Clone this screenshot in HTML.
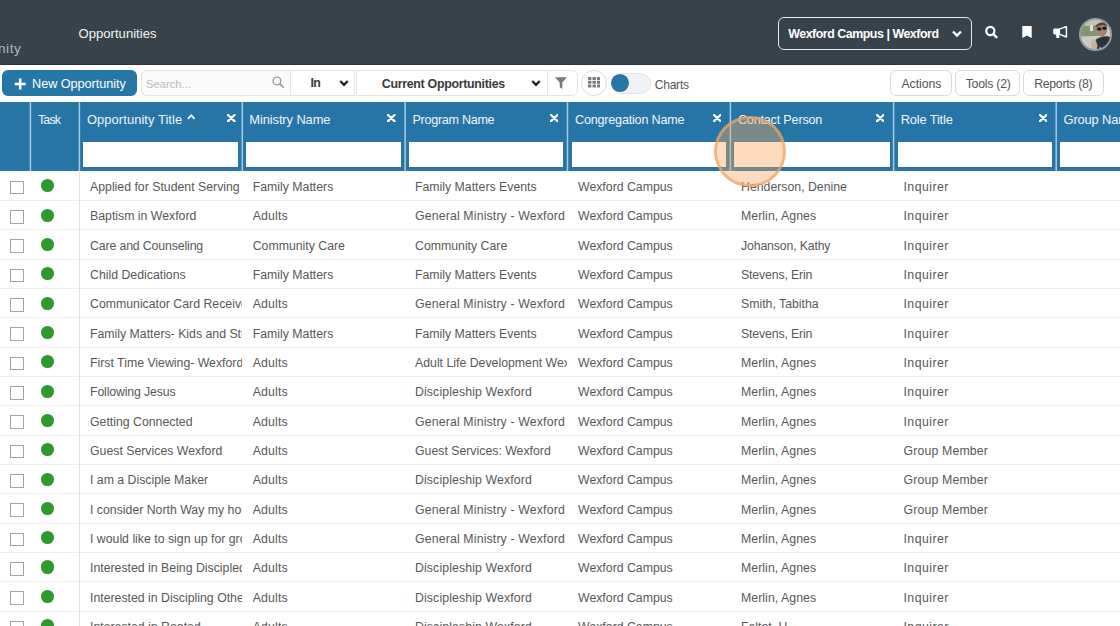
<!DOCTYPE html><html><head><meta charset="utf-8"><style>
*{box-sizing:border-box;margin:0;padding:0}
html,body{width:1120px;height:626px;overflow:hidden;background:#fff;font-family:"Liberation Sans",sans-serif;position:relative}
.abs{position:absolute}
.t{white-space:nowrap}
.box{position:absolute;background:#fff}
</style></head><body>
<div class="abs" style="left:0;top:0;width:1120px;height:65px;background:#37424a"></div>
<div class="abs" style="left:0;top:64px;width:1120px;height:1px;background:#2d343c"></div>
<div class="abs t" style="left:-2.10px;top:42.09px;font-size:13.6px;line-height:13.6px;color:#b4b9be;font-weight:normal;letter-spacing:0.6px;">nity</div>
<div class="abs t" style="left:78.60px;top:27.41px;font-size:13.1px;line-height:13.1px;color:#f1f3f4;font-weight:normal;letter-spacing:0px;">Opportunities</div>
<div class="abs" style="left:778px;top:17px;width:194px;height:33px;border:1.3px solid #e6e8ea;border-radius:6px"></div>
<div class="abs t" style="left:788.20px;top:27.80px;font-size:12.4px;line-height:12.4px;color:#fff;font-weight:bold;letter-spacing:-0.46px;">Wexford Campus | Wexford</div>
<svg class="abs" style="left:950px;top:29px" width="14" height="10" viewBox="0 0 14 10"><path d="M3 2.5 L7 6.5 L11 2.5" stroke="#fff" stroke-width="2.4" fill="none"/></svg>
<svg class="abs" style="left:984px;top:25px" width="15" height="14" viewBox="0 0 15 14"><circle cx="6.3" cy="6" r="4.1" stroke="#fff" stroke-width="2.1" fill="none"/><path d="M9.3 9.1 L12.5 12.2" stroke="#fff" stroke-width="2.4" stroke-linecap="round"/></svg>
<svg class="abs" style="left:1021.5px;top:26px" width="10" height="12.2" viewBox="0 0 10 12.2"><path d="M0.3 0 H9.7 V12.1 L5 9.5 L0.3 12.1 Z" fill="#fff"/></svg>
<svg class="abs" style="left:1053px;top:26px" width="16" height="13" viewBox="0 0 16 13"><path d="M6.3 3.1 L13.4 0.6 V11.0 L6.3 8.1 Z" fill="none" stroke="#fff" stroke-width="1.5" stroke-linejoin="round"/><path d="M1.6 2.6 H6.6 V8.4 H1.6 Q0.2 8.4 0.2 7 V4 Q0.2 2.6 1.6 2.6 Z" fill="#fff"/><path d="M2.8 8 H6.3 V12 H3.5 Z" fill="#fff"/></svg>
<svg class="abs" style="left:1079px;top:17.7px" width="33" height="33" viewBox="0 0 33 33"><defs><clipPath id="av"><circle cx="16.5" cy="16.5" r="15.5"/></clipPath><filter id="bl" x="-20%" y="-20%" width="140%" height="140%"><feGaussianBlur stdDeviation="0.6"/></filter></defs><g clip-path="url(#av)"><g filter="url(#bl)"><rect x="-2" y="-2" width="37" height="37" fill="#cfcfca"/><rect x="-2" y="-2" width="37" height="11" fill="#c4c1b8"/><path d="M-1 12 Q4 6 9 8 Q14 5 20 10 L20 18 L-1 19 Z" fill="#84966f"/><rect x="11" y="7" width="3" height="6" fill="#e0e0da"/><rect x="-1" y="18.5" width="22" height="16" fill="#cdcac3"/><ellipse cx="22.8" cy="11.5" rx="5.4" ry="7" fill="#a88270"/><path d="M16.5 7.5 Q22 2.5 28.5 6 L28.5 8.2 Q22 5.5 16.8 9.5 Z" fill="#4e4038"/><ellipse cx="20.2" cy="11" rx="2.3" ry="1.7" fill="#231a1e"/><ellipse cx="25.6" cy="10.3" rx="2.3" ry="1.7" fill="#231a1e"/><path d="M14.5 34 L15.5 23 Q21 17.5 30 18.5 L34 22 V34 Z" fill="#2a303d"/><path d="M13 34 L12 25.5 Q13.5 20 16.5 21.5 L18.5 27.5 L17.5 34 Z" fill="#c9b4a0"/><path d="M19 34 L21 28.5 L25 34 Z" fill="#c3c6ca"/></g></g><circle cx="16.5" cy="16.5" r="15.6" fill="none" stroke="#959ba0" stroke-width="1.9"/></svg>
<div class="abs" style="left:2px;top:70px;width:135px;height:26px;background:#2676a8;border-radius:6px"></div>
<svg class="abs" style="left:14px;top:78px" width="12" height="12" viewBox="0 0 12 12"><path d="M6.2 0.5 V11.5 M0.7 6 H11.7" stroke="#fff" stroke-width="2.5"/></svg>
<div class="abs t" style="left:32.10px;top:77.55px;font-size:12.7px;line-height:12.7px;color:#fff;font-weight:normal;letter-spacing:-0.06px;">New Opportunity</div>
<div class="abs" style="left:141px;top:70px;width:150px;height:26px;border:1px solid #e4e4e4;border-right:none;border-radius:6px 0 0 6px;background:#fafafb"></div>
<div class="abs t" style="left:146.00px;top:78.52px;font-size:11.2px;line-height:11.2px;color:#b9b9b9;font-weight:normal;letter-spacing:0px;">Search...</div>
<svg class="abs" style="left:272.2px;top:76px" width="12" height="12" viewBox="0 0 12 12"><circle cx="5" cy="5" r="3.9" stroke="#9b9b9b" stroke-width="1.4" fill="none"/><path d="M7.8 7.8 L11.2 11.2" stroke="#9b9b9b" stroke-width="1.7" stroke-linecap="round"/></svg>
<div class="abs" style="left:290px;top:70px;width:65px;height:26px;border:1px solid #e4e4e4;background:#fff"></div>
<div class="abs t" style="left:310.50px;top:77.40px;font-size:12.4px;line-height:12.4px;color:#3a3a3a;font-weight:bold;letter-spacing:-0.8px;">In</div>
<svg class="abs" style="left:337.5px;top:79px" width="12" height="9" viewBox="0 0 12 9"><path d="M2.3 2 L6 5.8 L9.7 2" stroke="#222" stroke-width="2.3" fill="none"/></svg>
<div class="abs" style="left:355.5px;top:70px;width:193px;height:26px;border:1px solid #e4e4e4;background:#fff"></div>
<div class="abs t" style="left:381.80px;top:78.40px;font-size:12.4px;line-height:12.4px;color:#3a3a3a;font-weight:bold;letter-spacing:-0.3px;">Current Opportunities</div>
<svg class="abs" style="left:530px;top:79px" width="12" height="9" viewBox="0 0 12 9"><path d="M2.3 2 L6 5.8 L9.7 2" stroke="#222" stroke-width="2.3" fill="none"/></svg>
<div class="abs" style="left:547px;top:70px;width:31px;height:26px;border:1px solid #e4e4e4;border-radius:0 6px 6px 0;background:#fff"></div>
<svg class="abs" style="left:555px;top:77.2px" width="12" height="12" viewBox="0 0 12 12"><path d="M0 0.3 H12 L7.3 5.6 V12 L4.7 10.2 V5.6 Z" fill="#7a7a7a"/></svg>
<div class="abs" style="left:581.1px;top:69.8px;width:26px;height:26px;border-radius:50%;border:1px solid #dedede;background:#fff"></div>
<svg class="abs" style="left:588px;top:77.3px" width="12.4" height="10.6" viewBox="0 0 12.4 10.6"><g fill="#7a7a7a"><rect x="0.0" y="0.0" width="3.4" height="2.9" rx="0.5"/><rect x="0.0" y="3.8" width="3.4" height="2.9" rx="0.5"/><rect x="0.0" y="7.6" width="3.4" height="2.9" rx="0.5"/><rect x="4.5" y="0.0" width="3.4" height="2.9" rx="0.5"/><rect x="4.5" y="3.8" width="3.4" height="2.9" rx="0.5"/><rect x="4.5" y="7.6" width="3.4" height="2.9" rx="0.5"/><rect x="9.0" y="0.0" width="3.4" height="2.9" rx="0.5"/><rect x="9.0" y="3.8" width="3.4" height="2.9" rx="0.5"/><rect x="9.0" y="7.6" width="3.4" height="2.9" rx="0.5"/></g></svg>
<div class="abs" style="left:611.3px;top:73px;width:39.5px;height:20.5px;border-radius:11px;background:#f1f2f6;border:1px solid #e3e4e8"></div>
<div class="abs" style="left:611.2px;top:74px;width:18px;height:17.8px;border-radius:50%;background:#2676a8"></div>
<div class="abs t" style="left:654.70px;top:78.96px;font-size:12.1px;line-height:12.1px;color:#555;font-weight:normal;letter-spacing:-0.25px;">Charts</div>
<div class="abs" style="left:890.3px;top:70.4px;width:61.4px;height:25.4px;border:1px solid #dadada;border-radius:6px;background:#fff"></div>
<div class="abs" style="left:955px;top:70.4px;width:65.3px;height:25.4px;border:1px solid #dadada;border-radius:6px;background:#fff"></div>
<div class="abs" style="left:1023.3px;top:70.4px;width:80.5px;height:25.4px;border:1px solid #dadada;border-radius:6px;background:#fff"></div>
<div class="abs t" style="left:901.40px;top:77.69px;font-size:12.3px;line-height:12.3px;color:#555;font-weight:normal;letter-spacing:-0.05px;">Actions</div>
<div class="abs t" style="left:965.70px;top:77.69px;font-size:12.3px;line-height:12.3px;color:#555;font-weight:normal;letter-spacing:-0.25px;">Tools (2)</div>
<div class="abs t" style="left:1034.20px;top:77.69px;font-size:12.3px;line-height:12.3px;color:#555;font-weight:normal;letter-spacing:-0.3px;">Reports (8)</div>
<div class="abs" style="left:0;top:102px;width:1120px;height:69px;background:#2675a6"></div>
<svg class="abs" style="left:0;top:102px" width="1120" height="69"><rect x="29.65" y="0" width="1.5" height="69" fill="#a6cbe8"/><rect x="78.65" y="0" width="1.5" height="69" fill="#a6cbe8"/><rect x="241.55" y="0" width="1.5" height="69" fill="#a6cbe8"/><rect x="404.35" y="0" width="1.5" height="69" fill="#a6cbe8"/><rect x="566.75" y="0" width="1.5" height="69" fill="#a6cbe8"/><rect x="729.65" y="0" width="1.5" height="69" fill="#a6cbe8"/><rect x="892.85" y="0" width="1.5" height="69" fill="#a6cbe8"/><rect x="1055.45" y="0" width="1.5" height="69" fill="#a6cbe8"/></svg>
<div class="abs t" style="left:37.90px;top:114.30px;font-size:12.4px;line-height:12.4px;color:#f2f6fa;font-weight:normal;letter-spacing:-0.8px;">Task</div>
<div class="abs t" style="left:87.00px;top:113.88px;font-size:12.9px;line-height:12.9px;color:#f2f6fa;font-weight:normal;letter-spacing:0.08px;">Opportunity Title</div>
<div class="abs t" style="left:249.30px;top:113.88px;font-size:12.9px;line-height:12.9px;color:#f2f6fa;font-weight:normal;letter-spacing:-0.1px;">Ministry Name</div>
<div class="abs t" style="left:412.50px;top:114.13px;font-size:12.6px;line-height:12.6px;color:#f2f6fa;font-weight:normal;letter-spacing:-0.3px;">Program Name</div>
<div class="abs t" style="left:575.00px;top:114.13px;font-size:12.6px;line-height:12.6px;color:#f2f6fa;font-weight:normal;letter-spacing:-0.2px;">Congregation Name</div>
<div class="abs t" style="left:737.90px;top:114.13px;font-size:12.6px;line-height:12.6px;color:#f2f6fa;font-weight:normal;letter-spacing:-0.18px;">Contact Person</div>
<div class="abs t" style="left:900.70px;top:113.88px;font-size:12.9px;line-height:12.9px;color:#f2f6fa;font-weight:normal;letter-spacing:-0.17px;">Role Title</div>
<div class="abs t" style="left:1063.50px;top:113.88px;font-size:12.9px;line-height:12.9px;color:#f2f6fa;font-weight:normal;letter-spacing:-0.15px;">Group Name</div>
<svg class="abs" style="left:187px;top:114px" width="8.5" height="5.5" viewBox="0 0 8.5 5.5"><path d="M0.9 4.8 L4.25 1.4 L7.6 4.8" stroke="#fff" stroke-width="1.8" fill="none"/></svg>
<svg class="abs" style="left:227.40px;top:113.8px" width="8.5" height="8.1" viewBox="0 0 8.5 8.1"><path d="M1 1 L7.5 7.1 M7.5 1 L1 7.1" stroke="#fff" stroke-width="2.3" stroke-linecap="round"/></svg>
<svg class="abs" style="left:387.40px;top:113.8px" width="8.5" height="8.1" viewBox="0 0 8.5 8.1"><path d="M1 1 L7.5 7.1 M7.5 1 L1 7.1" stroke="#fff" stroke-width="2.3" stroke-linecap="round"/></svg>
<svg class="abs" style="left:549.80px;top:113.8px" width="8.5" height="8.1" viewBox="0 0 8.5 8.1"><path d="M1 1 L7.5 7.1 M7.5 1 L1 7.1" stroke="#fff" stroke-width="2.3" stroke-linecap="round"/></svg>
<svg class="abs" style="left:712.70px;top:113.8px" width="8.5" height="8.1" viewBox="0 0 8.5 8.1"><path d="M1 1 L7.5 7.1 M7.5 1 L1 7.1" stroke="#fff" stroke-width="2.3" stroke-linecap="round"/></svg>
<svg class="abs" style="left:875.90px;top:113.8px" width="8.5" height="8.1" viewBox="0 0 8.5 8.1"><path d="M1 1 L7.5 7.1 M7.5 1 L1 7.1" stroke="#fff" stroke-width="2.3" stroke-linecap="round"/></svg>
<svg class="abs" style="left:1038.50px;top:113.8px" width="8.5" height="8.1" viewBox="0 0 8.5 8.1"><path d="M1 1 L7.5 7.1 M7.5 1 L1 7.1" stroke="#fff" stroke-width="2.3" stroke-linecap="round"/></svg>
<div class="abs" style="left:83.40px;top:142px;width:154.90px;height:25px;background:#fff"></div>
<div class="abs" style="left:246.30px;top:142px;width:154.80px;height:25px;background:#fff"></div>
<div class="abs" style="left:409.10px;top:142px;width:154.40px;height:25px;background:#fff"></div>
<div class="abs" style="left:571.50px;top:142px;width:154.90px;height:25px;background:#fff"></div>
<div class="abs" style="left:734.40px;top:142px;width:155.20px;height:25px;background:#fff"></div>
<div class="abs" style="left:897.60px;top:142px;width:154.60px;height:25px;background:#fff"></div>
<div class="abs" style="left:1060.20px;top:142px;width:200px;height:25px;background:#fff"></div>
<div class="abs" style="left:0;top:200px;width:1120px;height:1px;background:#eeeeee"></div>
<div class="abs" style="left:10.2px;top:180.65px;width:13.7px;height:13.6px;border:1.5px solid #a3a3a3;background:#fff"></div>
<div class="abs" style="left:40.7px;top:179.20px;width:13.6px;height:13.2px;border-radius:50%;background:#2c9a2c"></div>
<div class="abs t" style="left:90.00px;top:180.89px;font-size:12.3px;line-height:12.3px;color:#585858;font-weight:normal;letter-spacing:0px;width:151.6px;overflow:hidden;height:18px;line-height:18px;top:178.04px">Applied for Student Serving</div>
<div class="abs t" style="left:252.70px;top:180.89px;font-size:12.3px;line-height:12.3px;color:#585858;font-weight:normal;letter-spacing:0px;width:151.7px;overflow:hidden;height:18px;line-height:18px;top:178.04px">Family Matters</div>
<div class="abs t" style="left:415.00px;top:180.89px;font-size:12.3px;line-height:12.3px;color:#585858;font-weight:normal;letter-spacing:0px;width:152.0px;overflow:hidden;height:18px;line-height:18px;top:178.04px">Family Matters Events</div>
<div class="abs t" style="left:578.00px;top:180.89px;font-size:12.3px;line-height:12.3px;color:#585858;font-weight:normal;letter-spacing:0px;width:151.6px;overflow:hidden;height:18px;line-height:18px;top:178.04px">Wexford Campus</div>
<div class="abs t" style="left:741.00px;top:180.89px;font-size:12.3px;line-height:12.3px;color:#585858;font-weight:normal;letter-spacing:0px;width:151.9px;overflow:hidden;height:18px;line-height:18px;top:178.04px">Henderson, Denine</div>
<div class="abs t" style="left:903.50px;top:180.89px;font-size:12.3px;line-height:12.3px;color:#585858;font-weight:normal;letter-spacing:0.45px;width:152.0px;overflow:hidden;height:18px;line-height:18px;top:178.04px">Inquirer</div>
<div class="abs" style="left:0;top:229px;width:1120px;height:1px;background:#eeeeee"></div>
<div class="abs" style="left:10.2px;top:209.98px;width:13.7px;height:13.6px;border:1.5px solid #a3a3a3;background:#fff"></div>
<div class="abs" style="left:40.7px;top:208.53px;width:13.6px;height:13.2px;border-radius:50%;background:#2c9a2c"></div>
<div class="abs t" style="left:90.00px;top:210.22px;font-size:12.3px;line-height:12.3px;color:#585858;font-weight:normal;letter-spacing:0px;width:151.6px;overflow:hidden;height:18px;line-height:18px;top:207.37px">Baptism in Wexford</div>
<div class="abs t" style="left:252.70px;top:210.22px;font-size:12.3px;line-height:12.3px;color:#585858;font-weight:normal;letter-spacing:0.15px;width:151.7px;overflow:hidden;height:18px;line-height:18px;top:207.37px">Adults</div>
<div class="abs t" style="left:415.00px;top:210.22px;font-size:12.3px;line-height:12.3px;color:#585858;font-weight:normal;letter-spacing:0.15px;width:152.0px;overflow:hidden;height:18px;line-height:18px;top:207.37px">General Ministry - Wexford</div>
<div class="abs t" style="left:578.00px;top:210.22px;font-size:12.3px;line-height:12.3px;color:#585858;font-weight:normal;letter-spacing:0px;width:151.6px;overflow:hidden;height:18px;line-height:18px;top:207.37px">Wexford Campus</div>
<div class="abs t" style="left:741.00px;top:210.22px;font-size:12.3px;line-height:12.3px;color:#585858;font-weight:normal;letter-spacing:0.05px;width:151.9px;overflow:hidden;height:18px;line-height:18px;top:207.37px">Merlin, Agnes</div>
<div class="abs t" style="left:903.50px;top:210.22px;font-size:12.3px;line-height:12.3px;color:#585858;font-weight:normal;letter-spacing:0.45px;width:152.0px;overflow:hidden;height:18px;line-height:18px;top:207.37px">Inquirer</div>
<div class="abs" style="left:0;top:259px;width:1120px;height:1px;background:#eeeeee"></div>
<div class="abs" style="left:10.2px;top:239.31px;width:13.7px;height:13.6px;border:1.5px solid #a3a3a3;background:#fff"></div>
<div class="abs" style="left:40.7px;top:237.86px;width:13.6px;height:13.2px;border-radius:50%;background:#2c9a2c"></div>
<div class="abs t" style="left:90.00px;top:239.55px;font-size:12.3px;line-height:12.3px;color:#585858;font-weight:normal;letter-spacing:-0.13px;width:151.6px;overflow:hidden;height:18px;line-height:18px;top:236.70px">Care and Counseling</div>
<div class="abs t" style="left:252.70px;top:239.55px;font-size:12.3px;line-height:12.3px;color:#585858;font-weight:normal;letter-spacing:0px;width:151.7px;overflow:hidden;height:18px;line-height:18px;top:236.70px">Community Care</div>
<div class="abs t" style="left:415.00px;top:239.55px;font-size:12.3px;line-height:12.3px;color:#585858;font-weight:normal;letter-spacing:0px;width:152.0px;overflow:hidden;height:18px;line-height:18px;top:236.70px">Community Care</div>
<div class="abs t" style="left:578.00px;top:239.55px;font-size:12.3px;line-height:12.3px;color:#585858;font-weight:normal;letter-spacing:0px;width:151.6px;overflow:hidden;height:18px;line-height:18px;top:236.70px">Wexford Campus</div>
<div class="abs t" style="left:741.00px;top:239.55px;font-size:12.3px;line-height:12.3px;color:#585858;font-weight:normal;letter-spacing:-0.15px;width:151.9px;overflow:hidden;height:18px;line-height:18px;top:236.70px">Johanson, Kathy</div>
<div class="abs t" style="left:903.50px;top:239.55px;font-size:12.3px;line-height:12.3px;color:#585858;font-weight:normal;letter-spacing:0.45px;width:152.0px;overflow:hidden;height:18px;line-height:18px;top:236.70px">Inquirer</div>
<div class="abs" style="left:0;top:288px;width:1120px;height:1px;background:#eeeeee"></div>
<div class="abs" style="left:10.2px;top:268.64px;width:13.7px;height:13.6px;border:1.5px solid #a3a3a3;background:#fff"></div>
<div class="abs" style="left:40.7px;top:267.19px;width:13.6px;height:13.2px;border-radius:50%;background:#2c9a2c"></div>
<div class="abs t" style="left:90.00px;top:268.88px;font-size:12.3px;line-height:12.3px;color:#585858;font-weight:normal;letter-spacing:0px;width:151.6px;overflow:hidden;height:18px;line-height:18px;top:266.03px">Child Dedications</div>
<div class="abs t" style="left:252.70px;top:268.88px;font-size:12.3px;line-height:12.3px;color:#585858;font-weight:normal;letter-spacing:0px;width:151.7px;overflow:hidden;height:18px;line-height:18px;top:266.03px">Family Matters</div>
<div class="abs t" style="left:415.00px;top:268.88px;font-size:12.3px;line-height:12.3px;color:#585858;font-weight:normal;letter-spacing:0px;width:152.0px;overflow:hidden;height:18px;line-height:18px;top:266.03px">Family Matters Events</div>
<div class="abs t" style="left:578.00px;top:268.88px;font-size:12.3px;line-height:12.3px;color:#585858;font-weight:normal;letter-spacing:0px;width:151.6px;overflow:hidden;height:18px;line-height:18px;top:266.03px">Wexford Campus</div>
<div class="abs t" style="left:741.00px;top:268.88px;font-size:12.3px;line-height:12.3px;color:#585858;font-weight:normal;letter-spacing:-0.15px;width:151.9px;overflow:hidden;height:18px;line-height:18px;top:266.03px">Stevens, Erin</div>
<div class="abs t" style="left:903.50px;top:268.88px;font-size:12.3px;line-height:12.3px;color:#585858;font-weight:normal;letter-spacing:0.45px;width:152.0px;overflow:hidden;height:18px;line-height:18px;top:266.03px">Inquirer</div>
<div class="abs" style="left:0;top:317px;width:1120px;height:1px;background:#eeeeee"></div>
<div class="abs" style="left:10.2px;top:297.97px;width:13.7px;height:13.6px;border:1.5px solid #a3a3a3;background:#fff"></div>
<div class="abs" style="left:40.7px;top:296.52px;width:13.6px;height:13.2px;border-radius:50%;background:#2c9a2c"></div>
<div class="abs t" style="left:90.00px;top:298.21px;font-size:12.3px;line-height:12.3px;color:#585858;font-weight:normal;letter-spacing:0px;width:151.6px;overflow:hidden;height:18px;line-height:18px;top:295.36px">Communicator Card Received</div>
<div class="abs t" style="left:252.70px;top:298.21px;font-size:12.3px;line-height:12.3px;color:#585858;font-weight:normal;letter-spacing:0.15px;width:151.7px;overflow:hidden;height:18px;line-height:18px;top:295.36px">Adults</div>
<div class="abs t" style="left:415.00px;top:298.21px;font-size:12.3px;line-height:12.3px;color:#585858;font-weight:normal;letter-spacing:0.15px;width:152.0px;overflow:hidden;height:18px;line-height:18px;top:295.36px">General Ministry - Wexford</div>
<div class="abs t" style="left:578.00px;top:298.21px;font-size:12.3px;line-height:12.3px;color:#585858;font-weight:normal;letter-spacing:0px;width:151.6px;overflow:hidden;height:18px;line-height:18px;top:295.36px">Wexford Campus</div>
<div class="abs t" style="left:741.00px;top:298.21px;font-size:12.3px;line-height:12.3px;color:#585858;font-weight:normal;letter-spacing:0px;width:151.9px;overflow:hidden;height:18px;line-height:18px;top:295.36px">Smith, Tabitha</div>
<div class="abs t" style="left:903.50px;top:298.21px;font-size:12.3px;line-height:12.3px;color:#585858;font-weight:normal;letter-spacing:0.45px;width:152.0px;overflow:hidden;height:18px;line-height:18px;top:295.36px">Inquirer</div>
<div class="abs" style="left:0;top:347px;width:1120px;height:1px;background:#eeeeee"></div>
<div class="abs" style="left:10.2px;top:327.30px;width:13.7px;height:13.6px;border:1.5px solid #a3a3a3;background:#fff"></div>
<div class="abs" style="left:40.7px;top:325.85px;width:13.6px;height:13.2px;border-radius:50%;background:#2c9a2c"></div>
<div class="abs t" style="left:90.00px;top:327.54px;font-size:12.3px;line-height:12.3px;color:#585858;font-weight:normal;letter-spacing:0px;width:151.6px;overflow:hidden;height:18px;line-height:18px;top:324.69px">Family Matters- Kids and Students</div>
<div class="abs t" style="left:252.70px;top:327.54px;font-size:12.3px;line-height:12.3px;color:#585858;font-weight:normal;letter-spacing:0px;width:151.7px;overflow:hidden;height:18px;line-height:18px;top:324.69px">Family Matters</div>
<div class="abs t" style="left:415.00px;top:327.54px;font-size:12.3px;line-height:12.3px;color:#585858;font-weight:normal;letter-spacing:0px;width:152.0px;overflow:hidden;height:18px;line-height:18px;top:324.69px">Family Matters Events</div>
<div class="abs t" style="left:578.00px;top:327.54px;font-size:12.3px;line-height:12.3px;color:#585858;font-weight:normal;letter-spacing:0px;width:151.6px;overflow:hidden;height:18px;line-height:18px;top:324.69px">Wexford Campus</div>
<div class="abs t" style="left:741.00px;top:327.54px;font-size:12.3px;line-height:12.3px;color:#585858;font-weight:normal;letter-spacing:-0.15px;width:151.9px;overflow:hidden;height:18px;line-height:18px;top:324.69px">Stevens, Erin</div>
<div class="abs t" style="left:903.50px;top:327.54px;font-size:12.3px;line-height:12.3px;color:#585858;font-weight:normal;letter-spacing:0.45px;width:152.0px;overflow:hidden;height:18px;line-height:18px;top:324.69px">Inquirer</div>
<div class="abs" style="left:0;top:376px;width:1120px;height:1px;background:#eeeeee"></div>
<div class="abs" style="left:10.2px;top:356.63px;width:13.7px;height:13.6px;border:1.5px solid #a3a3a3;background:#fff"></div>
<div class="abs" style="left:40.7px;top:355.18px;width:13.6px;height:13.2px;border-radius:50%;background:#2c9a2c"></div>
<div class="abs t" style="left:90.00px;top:356.87px;font-size:12.3px;line-height:12.3px;color:#585858;font-weight:normal;letter-spacing:0px;width:151.6px;overflow:hidden;height:18px;line-height:18px;top:354.02px">First Time Viewing- Wexford</div>
<div class="abs t" style="left:252.70px;top:356.87px;font-size:12.3px;line-height:12.3px;color:#585858;font-weight:normal;letter-spacing:0.15px;width:151.7px;overflow:hidden;height:18px;line-height:18px;top:354.02px">Adults</div>
<div class="abs t" style="left:415.00px;top:356.87px;font-size:12.3px;line-height:12.3px;color:#585858;font-weight:normal;letter-spacing:0px;width:152.0px;overflow:hidden;height:18px;line-height:18px;top:354.02px">Adult Life Development Wexford</div>
<div class="abs t" style="left:578.00px;top:356.87px;font-size:12.3px;line-height:12.3px;color:#585858;font-weight:normal;letter-spacing:0px;width:151.6px;overflow:hidden;height:18px;line-height:18px;top:354.02px">Wexford Campus</div>
<div class="abs t" style="left:741.00px;top:356.87px;font-size:12.3px;line-height:12.3px;color:#585858;font-weight:normal;letter-spacing:0.05px;width:151.9px;overflow:hidden;height:18px;line-height:18px;top:354.02px">Merlin, Agnes</div>
<div class="abs t" style="left:903.50px;top:356.87px;font-size:12.3px;line-height:12.3px;color:#585858;font-weight:normal;letter-spacing:0.45px;width:152.0px;overflow:hidden;height:18px;line-height:18px;top:354.02px">Inquirer</div>
<div class="abs" style="left:0;top:405px;width:1120px;height:1px;background:#eeeeee"></div>
<div class="abs" style="left:10.2px;top:385.96px;width:13.7px;height:13.6px;border:1.5px solid #a3a3a3;background:#fff"></div>
<div class="abs" style="left:40.7px;top:384.51px;width:13.6px;height:13.2px;border-radius:50%;background:#2c9a2c"></div>
<div class="abs t" style="left:90.00px;top:386.20px;font-size:12.3px;line-height:12.3px;color:#585858;font-weight:normal;letter-spacing:-0.13px;width:151.6px;overflow:hidden;height:18px;line-height:18px;top:383.35px">Following Jesus</div>
<div class="abs t" style="left:252.70px;top:386.20px;font-size:12.3px;line-height:12.3px;color:#585858;font-weight:normal;letter-spacing:0.15px;width:151.7px;overflow:hidden;height:18px;line-height:18px;top:383.35px">Adults</div>
<div class="abs t" style="left:415.00px;top:386.20px;font-size:12.3px;line-height:12.3px;color:#585858;font-weight:normal;letter-spacing:0.12px;width:152.0px;overflow:hidden;height:18px;line-height:18px;top:383.35px">Discipleship Wexford</div>
<div class="abs t" style="left:578.00px;top:386.20px;font-size:12.3px;line-height:12.3px;color:#585858;font-weight:normal;letter-spacing:0px;width:151.6px;overflow:hidden;height:18px;line-height:18px;top:383.35px">Wexford Campus</div>
<div class="abs t" style="left:741.00px;top:386.20px;font-size:12.3px;line-height:12.3px;color:#585858;font-weight:normal;letter-spacing:0.05px;width:151.9px;overflow:hidden;height:18px;line-height:18px;top:383.35px">Merlin, Agnes</div>
<div class="abs t" style="left:903.50px;top:386.20px;font-size:12.3px;line-height:12.3px;color:#585858;font-weight:normal;letter-spacing:0.45px;width:152.0px;overflow:hidden;height:18px;line-height:18px;top:383.35px">Inquirer</div>
<div class="abs" style="left:0;top:435px;width:1120px;height:1px;background:#eeeeee"></div>
<div class="abs" style="left:10.2px;top:415.29px;width:13.7px;height:13.6px;border:1.5px solid #a3a3a3;background:#fff"></div>
<div class="abs" style="left:40.7px;top:413.84px;width:13.6px;height:13.2px;border-radius:50%;background:#2c9a2c"></div>
<div class="abs t" style="left:90.00px;top:415.53px;font-size:12.3px;line-height:12.3px;color:#585858;font-weight:normal;letter-spacing:0px;width:151.6px;overflow:hidden;height:18px;line-height:18px;top:412.68px">Getting Connected</div>
<div class="abs t" style="left:252.70px;top:415.53px;font-size:12.3px;line-height:12.3px;color:#585858;font-weight:normal;letter-spacing:0.15px;width:151.7px;overflow:hidden;height:18px;line-height:18px;top:412.68px">Adults</div>
<div class="abs t" style="left:415.00px;top:415.53px;font-size:12.3px;line-height:12.3px;color:#585858;font-weight:normal;letter-spacing:0.15px;width:152.0px;overflow:hidden;height:18px;line-height:18px;top:412.68px">General Ministry - Wexford</div>
<div class="abs t" style="left:578.00px;top:415.53px;font-size:12.3px;line-height:12.3px;color:#585858;font-weight:normal;letter-spacing:0px;width:151.6px;overflow:hidden;height:18px;line-height:18px;top:412.68px">Wexford Campus</div>
<div class="abs t" style="left:741.00px;top:415.53px;font-size:12.3px;line-height:12.3px;color:#585858;font-weight:normal;letter-spacing:0.05px;width:151.9px;overflow:hidden;height:18px;line-height:18px;top:412.68px">Merlin, Agnes</div>
<div class="abs t" style="left:903.50px;top:415.53px;font-size:12.3px;line-height:12.3px;color:#585858;font-weight:normal;letter-spacing:0.45px;width:152.0px;overflow:hidden;height:18px;line-height:18px;top:412.68px">Inquirer</div>
<div class="abs" style="left:0;top:464px;width:1120px;height:1px;background:#eeeeee"></div>
<div class="abs" style="left:10.2px;top:444.62px;width:13.7px;height:13.6px;border:1.5px solid #a3a3a3;background:#fff"></div>
<div class="abs" style="left:40.7px;top:443.17px;width:13.6px;height:13.2px;border-radius:50%;background:#2c9a2c"></div>
<div class="abs t" style="left:90.00px;top:444.86px;font-size:12.3px;line-height:12.3px;color:#585858;font-weight:normal;letter-spacing:0px;width:151.6px;overflow:hidden;height:18px;line-height:18px;top:442.01px">Guest Services Wexford</div>
<div class="abs t" style="left:252.70px;top:444.86px;font-size:12.3px;line-height:12.3px;color:#585858;font-weight:normal;letter-spacing:0.15px;width:151.7px;overflow:hidden;height:18px;line-height:18px;top:442.01px">Adults</div>
<div class="abs t" style="left:415.00px;top:444.86px;font-size:12.3px;line-height:12.3px;color:#585858;font-weight:normal;letter-spacing:0px;width:152.0px;overflow:hidden;height:18px;line-height:18px;top:442.01px">Guest Services: Wexford</div>
<div class="abs t" style="left:578.00px;top:444.86px;font-size:12.3px;line-height:12.3px;color:#585858;font-weight:normal;letter-spacing:0px;width:151.6px;overflow:hidden;height:18px;line-height:18px;top:442.01px">Wexford Campus</div>
<div class="abs t" style="left:741.00px;top:444.86px;font-size:12.3px;line-height:12.3px;color:#585858;font-weight:normal;letter-spacing:0.05px;width:151.9px;overflow:hidden;height:18px;line-height:18px;top:442.01px">Merlin, Agnes</div>
<div class="abs t" style="left:903.50px;top:444.86px;font-size:12.3px;line-height:12.3px;color:#585858;font-weight:normal;letter-spacing:0.15px;width:152.0px;overflow:hidden;height:18px;line-height:18px;top:442.01px">Group Member</div>
<div class="abs" style="left:0;top:493px;width:1120px;height:1px;background:#eeeeee"></div>
<div class="abs" style="left:10.2px;top:473.95px;width:13.7px;height:13.6px;border:1.5px solid #a3a3a3;background:#fff"></div>
<div class="abs" style="left:40.7px;top:472.50px;width:13.6px;height:13.2px;border-radius:50%;background:#2c9a2c"></div>
<div class="abs t" style="left:90.00px;top:474.19px;font-size:12.3px;line-height:12.3px;color:#585858;font-weight:normal;letter-spacing:0px;width:151.6px;overflow:hidden;height:18px;line-height:18px;top:471.34px">I am a Disciple Maker</div>
<div class="abs t" style="left:252.70px;top:474.19px;font-size:12.3px;line-height:12.3px;color:#585858;font-weight:normal;letter-spacing:0.15px;width:151.7px;overflow:hidden;height:18px;line-height:18px;top:471.34px">Adults</div>
<div class="abs t" style="left:415.00px;top:474.19px;font-size:12.3px;line-height:12.3px;color:#585858;font-weight:normal;letter-spacing:0.12px;width:152.0px;overflow:hidden;height:18px;line-height:18px;top:471.34px">Discipleship Wexford</div>
<div class="abs t" style="left:578.00px;top:474.19px;font-size:12.3px;line-height:12.3px;color:#585858;font-weight:normal;letter-spacing:0px;width:151.6px;overflow:hidden;height:18px;line-height:18px;top:471.34px">Wexford Campus</div>
<div class="abs t" style="left:741.00px;top:474.19px;font-size:12.3px;line-height:12.3px;color:#585858;font-weight:normal;letter-spacing:0.05px;width:151.9px;overflow:hidden;height:18px;line-height:18px;top:471.34px">Merlin, Agnes</div>
<div class="abs t" style="left:903.50px;top:474.19px;font-size:12.3px;line-height:12.3px;color:#585858;font-weight:normal;letter-spacing:0.15px;width:152.0px;overflow:hidden;height:18px;line-height:18px;top:471.34px">Group Member</div>
<div class="abs" style="left:0;top:523px;width:1120px;height:1px;background:#eeeeee"></div>
<div class="abs" style="left:10.2px;top:503.28px;width:13.7px;height:13.6px;border:1.5px solid #a3a3a3;background:#fff"></div>
<div class="abs" style="left:40.7px;top:501.83px;width:13.6px;height:13.2px;border-radius:50%;background:#2c9a2c"></div>
<div class="abs t" style="left:90.00px;top:503.52px;font-size:12.3px;line-height:12.3px;color:#585858;font-weight:normal;letter-spacing:0px;width:151.6px;overflow:hidden;height:18px;line-height:18px;top:500.67px">I consider North Way my home</div>
<div class="abs t" style="left:252.70px;top:503.52px;font-size:12.3px;line-height:12.3px;color:#585858;font-weight:normal;letter-spacing:0.15px;width:151.7px;overflow:hidden;height:18px;line-height:18px;top:500.67px">Adults</div>
<div class="abs t" style="left:415.00px;top:503.52px;font-size:12.3px;line-height:12.3px;color:#585858;font-weight:normal;letter-spacing:0.15px;width:152.0px;overflow:hidden;height:18px;line-height:18px;top:500.67px">General Ministry - Wexford</div>
<div class="abs t" style="left:578.00px;top:503.52px;font-size:12.3px;line-height:12.3px;color:#585858;font-weight:normal;letter-spacing:0px;width:151.6px;overflow:hidden;height:18px;line-height:18px;top:500.67px">Wexford Campus</div>
<div class="abs t" style="left:741.00px;top:503.52px;font-size:12.3px;line-height:12.3px;color:#585858;font-weight:normal;letter-spacing:0.05px;width:151.9px;overflow:hidden;height:18px;line-height:18px;top:500.67px">Merlin, Agnes</div>
<div class="abs t" style="left:903.50px;top:503.52px;font-size:12.3px;line-height:12.3px;color:#585858;font-weight:normal;letter-spacing:0.15px;width:152.0px;overflow:hidden;height:18px;line-height:18px;top:500.67px">Group Member</div>
<div class="abs" style="left:0;top:552px;width:1120px;height:1px;background:#eeeeee"></div>
<div class="abs" style="left:10.2px;top:532.61px;width:13.7px;height:13.6px;border:1.5px solid #a3a3a3;background:#fff"></div>
<div class="abs" style="left:40.7px;top:531.16px;width:13.6px;height:13.2px;border-radius:50%;background:#2c9a2c"></div>
<div class="abs t" style="left:90.00px;top:532.85px;font-size:12.3px;line-height:12.3px;color:#585858;font-weight:normal;letter-spacing:0px;width:151.6px;overflow:hidden;height:18px;line-height:18px;top:530.00px">I would like to sign up for group</div>
<div class="abs t" style="left:252.70px;top:532.85px;font-size:12.3px;line-height:12.3px;color:#585858;font-weight:normal;letter-spacing:0.15px;width:151.7px;overflow:hidden;height:18px;line-height:18px;top:530.00px">Adults</div>
<div class="abs t" style="left:415.00px;top:532.85px;font-size:12.3px;line-height:12.3px;color:#585858;font-weight:normal;letter-spacing:0.15px;width:152.0px;overflow:hidden;height:18px;line-height:18px;top:530.00px">General Ministry - Wexford</div>
<div class="abs t" style="left:578.00px;top:532.85px;font-size:12.3px;line-height:12.3px;color:#585858;font-weight:normal;letter-spacing:0px;width:151.6px;overflow:hidden;height:18px;line-height:18px;top:530.00px">Wexford Campus</div>
<div class="abs t" style="left:741.00px;top:532.85px;font-size:12.3px;line-height:12.3px;color:#585858;font-weight:normal;letter-spacing:0.05px;width:151.9px;overflow:hidden;height:18px;line-height:18px;top:530.00px">Merlin, Agnes</div>
<div class="abs t" style="left:903.50px;top:532.85px;font-size:12.3px;line-height:12.3px;color:#585858;font-weight:normal;letter-spacing:0.45px;width:152.0px;overflow:hidden;height:18px;line-height:18px;top:530.00px">Inquirer</div>
<div class="abs" style="left:0;top:581px;width:1120px;height:1px;background:#eeeeee"></div>
<div class="abs" style="left:10.2px;top:561.94px;width:13.7px;height:13.6px;border:1.5px solid #a3a3a3;background:#fff"></div>
<div class="abs" style="left:40.7px;top:560.49px;width:13.6px;height:13.2px;border-radius:50%;background:#2c9a2c"></div>
<div class="abs t" style="left:90.00px;top:562.18px;font-size:12.3px;line-height:12.3px;color:#585858;font-weight:normal;letter-spacing:0px;width:151.6px;overflow:hidden;height:18px;line-height:18px;top:559.33px">Interested in Being Discipled</div>
<div class="abs t" style="left:252.70px;top:562.18px;font-size:12.3px;line-height:12.3px;color:#585858;font-weight:normal;letter-spacing:0.15px;width:151.7px;overflow:hidden;height:18px;line-height:18px;top:559.33px">Adults</div>
<div class="abs t" style="left:415.00px;top:562.18px;font-size:12.3px;line-height:12.3px;color:#585858;font-weight:normal;letter-spacing:0.12px;width:152.0px;overflow:hidden;height:18px;line-height:18px;top:559.33px">Discipleship Wexford</div>
<div class="abs t" style="left:578.00px;top:562.18px;font-size:12.3px;line-height:12.3px;color:#585858;font-weight:normal;letter-spacing:0px;width:151.6px;overflow:hidden;height:18px;line-height:18px;top:559.33px">Wexford Campus</div>
<div class="abs t" style="left:741.00px;top:562.18px;font-size:12.3px;line-height:12.3px;color:#585858;font-weight:normal;letter-spacing:0.05px;width:151.9px;overflow:hidden;height:18px;line-height:18px;top:559.33px">Merlin, Agnes</div>
<div class="abs t" style="left:903.50px;top:562.18px;font-size:12.3px;line-height:12.3px;color:#585858;font-weight:normal;letter-spacing:0.45px;width:152.0px;overflow:hidden;height:18px;line-height:18px;top:559.33px">Inquirer</div>
<div class="abs" style="left:0;top:611px;width:1120px;height:1px;background:#eeeeee"></div>
<div class="abs" style="left:10.2px;top:591.27px;width:13.7px;height:13.6px;border:1.5px solid #a3a3a3;background:#fff"></div>
<div class="abs" style="left:40.7px;top:589.82px;width:13.6px;height:13.2px;border-radius:50%;background:#2c9a2c"></div>
<div class="abs t" style="left:90.00px;top:591.51px;font-size:12.3px;line-height:12.3px;color:#585858;font-weight:normal;letter-spacing:0px;width:151.6px;overflow:hidden;height:18px;line-height:18px;top:588.66px">Interested in Discipling Others</div>
<div class="abs t" style="left:252.70px;top:591.51px;font-size:12.3px;line-height:12.3px;color:#585858;font-weight:normal;letter-spacing:0.15px;width:151.7px;overflow:hidden;height:18px;line-height:18px;top:588.66px">Adults</div>
<div class="abs t" style="left:415.00px;top:591.51px;font-size:12.3px;line-height:12.3px;color:#585858;font-weight:normal;letter-spacing:0.12px;width:152.0px;overflow:hidden;height:18px;line-height:18px;top:588.66px">Discipleship Wexford</div>
<div class="abs t" style="left:578.00px;top:591.51px;font-size:12.3px;line-height:12.3px;color:#585858;font-weight:normal;letter-spacing:0px;width:151.6px;overflow:hidden;height:18px;line-height:18px;top:588.66px">Wexford Campus</div>
<div class="abs t" style="left:741.00px;top:591.51px;font-size:12.3px;line-height:12.3px;color:#585858;font-weight:normal;letter-spacing:0.05px;width:151.9px;overflow:hidden;height:18px;line-height:18px;top:588.66px">Merlin, Agnes</div>
<div class="abs t" style="left:903.50px;top:591.51px;font-size:12.3px;line-height:12.3px;color:#585858;font-weight:normal;letter-spacing:0.45px;width:152.0px;overflow:hidden;height:18px;line-height:18px;top:588.66px">Inquirer</div>
<div class="abs" style="left:0;top:640px;width:1120px;height:1px;background:#eeeeee"></div>
<div class="abs" style="left:10.2px;top:620.60px;width:13.7px;height:13.6px;border:1.5px solid #a3a3a3;background:#fff"></div>
<div class="abs" style="left:40.7px;top:619.15px;width:13.6px;height:13.2px;border-radius:50%;background:#2c9a2c"></div>
<div class="abs t" style="left:90.00px;top:620.84px;font-size:12.3px;line-height:12.3px;color:#585858;font-weight:normal;letter-spacing:0px;width:151.6px;overflow:hidden;height:18px;line-height:18px;top:617.99px">Interested in Rooted</div>
<div class="abs t" style="left:252.70px;top:620.84px;font-size:12.3px;line-height:12.3px;color:#585858;font-weight:normal;letter-spacing:0.15px;width:151.7px;overflow:hidden;height:18px;line-height:18px;top:617.99px">Adults</div>
<div class="abs t" style="left:415.00px;top:620.84px;font-size:12.3px;line-height:12.3px;color:#585858;font-weight:normal;letter-spacing:0.12px;width:152.0px;overflow:hidden;height:18px;line-height:18px;top:617.99px">Discipleship Wexford</div>
<div class="abs t" style="left:578.00px;top:620.84px;font-size:12.3px;line-height:12.3px;color:#585858;font-weight:normal;letter-spacing:0px;width:151.6px;overflow:hidden;height:18px;line-height:18px;top:617.99px">Wexford Campus</div>
<div class="abs t" style="left:741.00px;top:620.84px;font-size:12.3px;line-height:12.3px;color:#585858;font-weight:normal;letter-spacing:0px;width:151.9px;overflow:hidden;height:18px;line-height:18px;top:617.99px">Faltot, H</div>
<div class="abs t" style="left:903.50px;top:620.84px;font-size:12.3px;line-height:12.3px;color:#585858;font-weight:normal;letter-spacing:0.45px;width:152.0px;overflow:hidden;height:18px;line-height:18px;top:617.99px">Inquirer</div>
<div class="abs" style="left:78.7px;top:171.5px;width:1px;height:460px;background:#dfe3e6"></div>
<div class="abs" style="left:714.3px;top:115.6px;width:71.6px;height:71.6px;border-radius:50%;background:rgba(248,165,95,0.40);border:3.8px solid rgba(238,165,100,0.68)"></div>
</body></html>
